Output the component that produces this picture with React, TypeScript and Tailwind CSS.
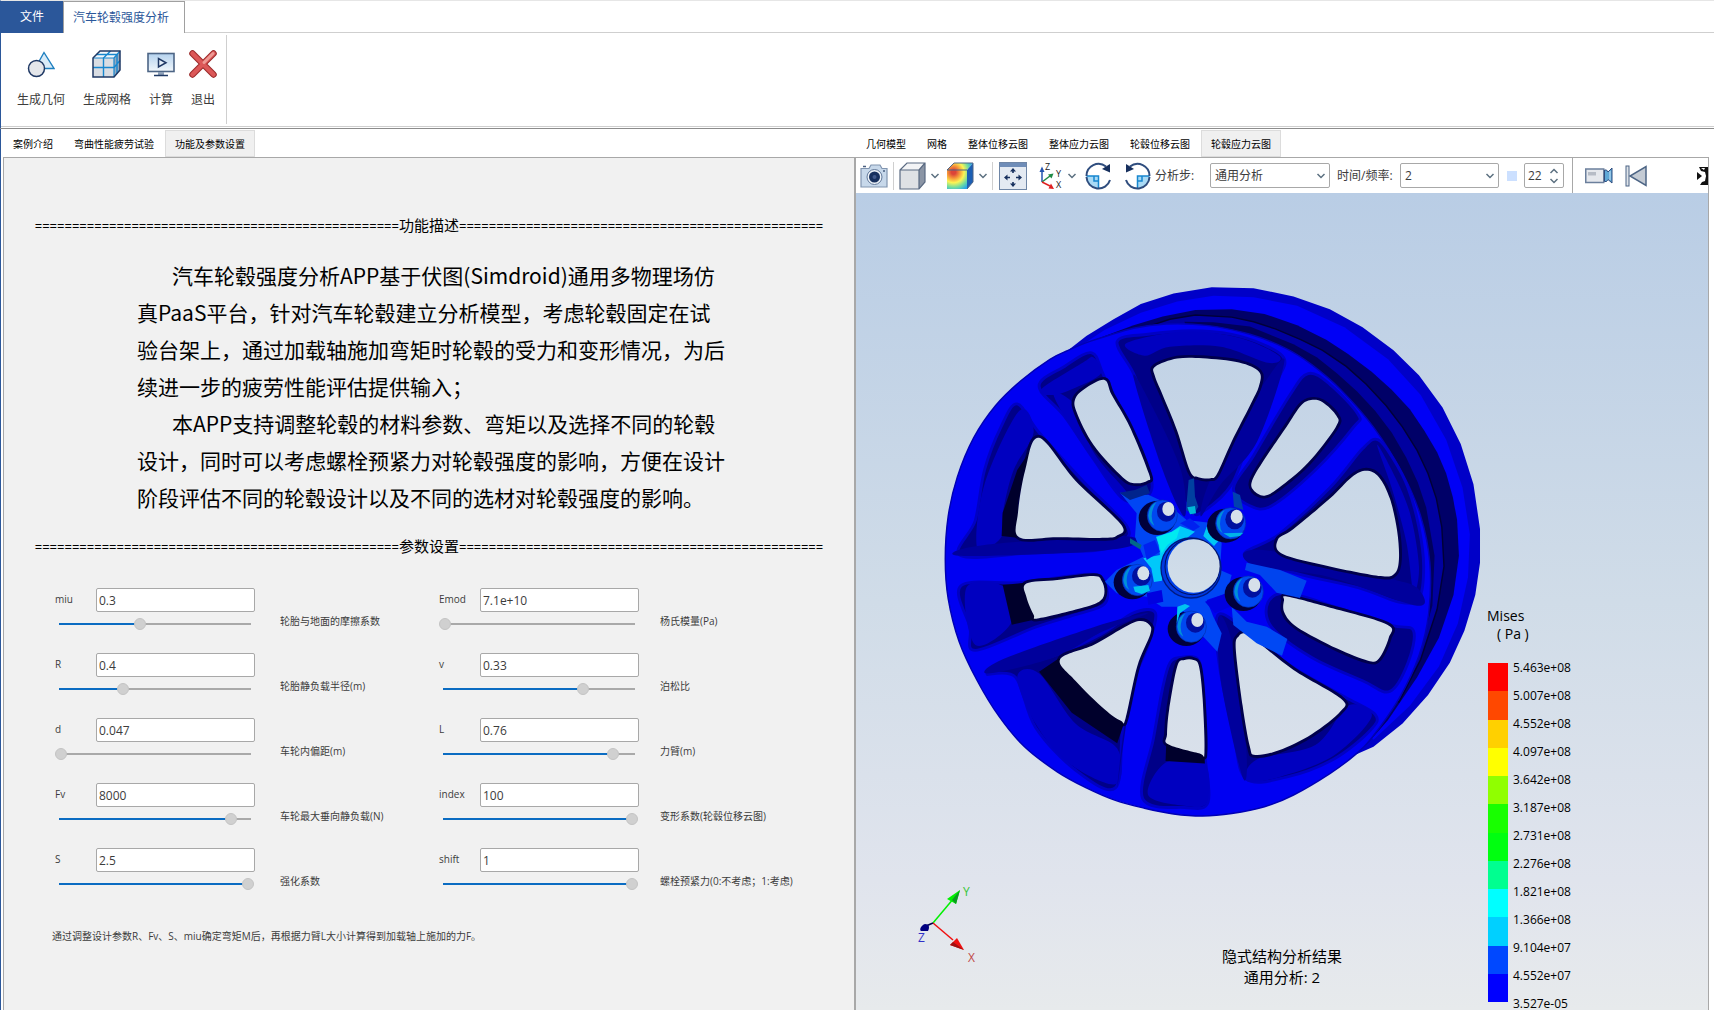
import type { ReactNode } from "react";

type Point = [number, number];

type FieldData = {
  name: string;
  value: string;
  percent: number;
  hint: string;
};

const leftTabs = ["案例介绍", "弯曲性能疲劳试验", "功能及参数设置"];

const rightTabs = [
  "几何模型",
  "网格",
  "整体位移云图",
  "整体应力云图",
  "轮毂位移云图",
  "轮毂应力云图",
];

const description = [
  "汽车轮毂强度分析APP基于伏图(Simdroid)通用多物理场仿",
  "真PaaS平台，针对汽车轮毂建立分析模型，考虑轮毂固定在试",
  "验台架上，通过加载轴施加弯矩时轮毂的受力和变形情况，为后",
  "续进一步的疲劳性能评估提供输入；",
  "本APP支持调整轮毂的材料参数、弯矩以及选择不同的轮毂",
  "设计，同时可以考虑螺栓预紧力对轮毂强度的影响，方便在设计",
  "阶段评估不同的轮毂设计以及不同的选材对轮毂强度的影响。",
];

const wheelFields: FieldData[] = [
  { name: "miu", value: "0.3", percent: 42, hint: "轮胎与地面的摩擦系数" },
  { name: "R", value: "0.4", percent: 33, hint: "轮胎静负载半径(m)" },
  { name: "d", value: "0.047", percent: 0, hint: "车轮内偏距(m)" },
  { name: "Fv", value: "8000", percent: 91, hint: "车轮最大垂向静负载(N)" },
  { name: "S", value: "2.5", percent: 100, hint: "强化系数" },
];

const materialFields: FieldData[] = [
  { name: "Emod", value: "7.1e+10", percent: 0, hint: "杨氏模量(Pa)" },
  { name: "v", value: "0.33", percent: 74, hint: "泊松比" },
  { name: "L", value: "0.76", percent: 90, hint: "力臂(m)" },
  { name: "index", value: "100", percent: 100, hint: "变形系数(轮毂位移云图)" },
  { name: "shift", value: "1", percent: 100, hint: "螺栓预紧力(0:不考虑；1:考虑)" },
];

const legendColors = [
  "bg-[#ff0000]",
  "bg-[#ff4800]",
  "bg-[#ffd000]",
  "bg-[#ffff00]",
  "bg-[#90ff00]",
  "bg-[#18ff00]",
  "bg-[#00ff10]",
  "bg-[#00ff90]",
  "bg-[#00ffff]",
  "bg-[#00d0ff]",
  "bg-[#0048ff]",
  "bg-[#0000ff]",
];

const legendValues = [
  "5.463e+08",
  "5.007e+08",
  "4.552e+08",
  "4.097e+08",
  "3.642e+08",
  "3.187e+08",
  "2.731e+08",
  "2.276e+08",
  "1.821e+08",
  "1.366e+08",
  "9.104e+07",
  "4.552e+07",
  "3.527e-05",
];

const App = () => {
  return (
    <div
      lang="zh-CN"
      className="flex h-screen flex-col overflow-hidden bg-white font-['Open_Sans','Noto_Sans_CJK_SC',sans-serif] text-xs text-[#3c3c3c]"
    >
      <Ribbon />
      <main className="flex min-h-0 flex-1 border-t border-[#8c8c8c]">
        <SettingsPane />
        <ResultPane />
      </main>
    </div>
  );
};

export default App;

/* ---------- ribbon ---------- */

const Ribbon = () => {
  return (
    <header className="border-t border-l border-t-[#e6e6e6] border-l-[#2b579a]">
      <div className="flex h-8">
        <button className="w-[62px] bg-[#2b579a] text-white">文件</button>
        <button className="w-[122px] border-x border-t border-[#a0a0a0] pr-1.5 text-[#2b579a]">
          汽车轮毂强度分析
        </button>
        <div className="flex-1 border-b border-[#cfcfcf]" />
      </div>
      <div className="flex h-[93px] pt-0.5 pb-0.5">
        <div className="flex border-r border-[#cfcfcf] pt-[15px] pr-0.5 pl-[7px]">
          <RibbonButton label="生成几何" width="w-[66px]">
            <GeometryIcon />
          </RibbonButton>
          <RibbonButton label="生成网格" width="w-[66px]">
            <MeshIcon />
          </RibbonButton>
          <RibbonButton label="计算" width="w-[42px]">
            <ComputeIcon />
          </RibbonButton>
          <RibbonButton label="退出" width="w-[42px]">
            <ExitIcon />
          </RibbonButton>
        </div>
      </div>
      <div className="h-0.5 border-t border-[#cfcfcf]" />
    </header>
  );
};

const RibbonButton = ({
  label,
  width,
  children,
}: {
  label: string;
  width: string;
  children: ReactNode;
}) => {
  return (
    <button className={`flex flex-col items-center gap-3.5 ${width}`}>
      {children}
      <span className="leading-4">{label}</span>
    </button>
  );
};

const GeometryIcon = () => (
  <svg width="28" height="28" viewBox="0 0 28 28">
    <path d="M17 2.5 27 18.5H8Z" fill="#d8ebf8" stroke="#1d7fc0" strokeWidth="1.4" />
    <circle cx="9.500" cy="18.500" r="8" fill="#e4e6ea" stroke="#1f3864" strokeWidth="1.5" />
  </svg>
);

const MeshIcon = () => (
  <svg width="30" height="28" viewBox="0 0 30 28">
    <path d="M1 8 8 1h20l-6 7Z" fill="#f4f7fa" />
    <path d="M1 8h21v19H1Z" fill="#d9dde3" />
    <path d="M22 8l6-7v19l-6 7Z" fill="#93a9c0" />
    <path d="M11.500 27V8l7-7M4.500 4.500H25v19M1 17.500h21l6-7" fill="none" stroke="#1787cf" strokeWidth="1.4" />
    <path d="M1 8h21v19M22 8l6-7" fill="none" stroke="#1787cf" strokeWidth="1.2" />
    <path d="M1 8 8 1h20v19l-6 7H1Z" fill="none" stroke="#1f3864" strokeWidth="1.5" />
  </svg>
);

const ComputeIcon = () => (
  <svg width="28" height="28" viewBox="0 0 28 28">
    <defs>
      <linearGradient id="screen" x2="0" y2="1">
        <stop stopColor="#b4d2ee" />
        <stop offset="1" stopColor="#f2f7fb" />
      </linearGradient>
    </defs>
    <rect x="1" y="3.500" width="26" height="18" fill="url(#screen)" stroke="#4d6585" strokeWidth="1.600" />
    <path d="M11.500 8.500v8.500l7.500-4.250Z" fill="#e7f1fa" stroke="#1f3864" strokeWidth="1.500" />
    <path d="M11 22h6v3h-6Z" fill="#8ea0b8" />
    <path d="M7 25.500h14" stroke="#1f3864" strokeWidth="1.500" />
  </svg>
);

const ExitIcon = () => (
  <svg width="28" height="28" viewBox="0 0 28 28">
    <path d="M3.500 3.500 24.500 24.500M24.500 3.500 3.500 24.500" stroke="#9c2b2b" strokeWidth="6.500" strokeLinecap="round" />
    <path d="M3.500 3.500 24.500 24.500M24.500 3.500 3.500 24.500" stroke="#dc5858" strokeWidth="4.500" strokeLinecap="round" />
    <path d="M24 3.500 15 12.500" stroke="#ee9a94" strokeWidth="3" strokeLinecap="round" />
  </svg>
);

/* ---------- left pane ---------- */

const Tabs = ({ items, active }: { items: string[]; active: string }) => {
  return (
    <div role="tablist" className="flex h-7 gap-px pt-px text-[10px] text-black">
      {items.map((item) => (
        <button
          key={item}
          role="tab"
          aria-selected={item === active}
          className={
            item === active
              ? "border border-[#dcdcdc] bg-[#f0f0f0] px-[9px] pt-0.5"
              : "px-2.5 pt-0.5"
          }
        >
          {item}
        </button>
      ))}
    </div>
  );
};

const SettingsPane = () => {
  return (
    <section className="flex w-[calc(50%-1px)] flex-col border-l border-[#2b579a] pl-0.5">
      <Tabs items={leftTabs} active="功能及参数设置" />
      <div className="flex-1 border-t border-r-2 border-l border-[#a8a8a8] bg-[#f1f1f1] pt-[57px]">
        <SectionTitle text="功能描述" />
        <div className="mx-auto mt-[22px] w-[584px] text-[21px] leading-[37px] whitespace-nowrap text-black">
          {description.map((line, i) => (
            <p
              key={line}
              className={`font-['Noto_Sans_CJK_SC',sans-serif] ${i === 0 || i === 4 ? "pl-[35px]" : ""}`}
            >
              {line}
            </p>
          ))}
        </div>
        <div className="mt-5">
          <SectionTitle text="参数设置" />
        </div>
        <form className="mt-8 grid grid-cols-[384fr_415fr] pl-[51px]">
          <div>
            {wheelFields.map((field) => (
              <Field key={field.name} field={field} gap="gap-[25px]" />
            ))}
          </div>
          <div>
            {materialFields.map((field) => (
              <Field key={field.name} field={field} gap="gap-[21px]" />
            ))}
          </div>
        </form>
        <p className="mt-[13px] pl-12 text-[10px] leading-5">
          通过调整设计参数R、Fv、S、miu确定弯矩M后，再根据力臂L大小计算得到加载轴上施加的力F。
        </p>
      </div>
    </section>
  );
};

const SectionTitle = ({ text }: { text: string }) => {
  const rule = "=".repeat(49);
  return (
    <h2 className="flex h-5 items-baseline justify-center text-[13px] leading-5 whitespace-nowrap text-black">
      {rule}
      <span className="text-[15px]">{text}</span>
      {rule}
    </h2>
  );
};

const Field = ({ field, gap }: { field: FieldData; gap: string }) => {
  return (
    <div className={`flex h-[65px] ${gap}`}>
      <div className="w-[200px]">
        <div className="flex items-center">
          <label htmlFor={field.name} className="w-[41px] text-[10px]">
            {field.name}
          </label>
          <input
            id={field.name}
            defaultValue={field.value}
            className="h-6 w-[159px] rounded-xs border border-[#a8a8a8] bg-white px-0.5 outline-none"
          />
        </div>
        <input
          type="range"
          aria-label={field.hint}
          min={0}
          max={100}
          defaultValue={field.percent}
          className="mt-1.5 block h-3 w-[199px] appearance-none bg-[length:192px_2px] bg-[position:4px_50%] bg-no-repeat [&::-webkit-slider-thumb]:size-3 [&::-webkit-slider-thumb]:appearance-none [&::-webkit-slider-thumb]:rounded-full [&::-webkit-slider-thumb]:border [&::-webkit-slider-thumb]:border-[#c4c4c4] [&::-webkit-slider-thumb]:bg-[#d0d0d0]"
          style={{
            backgroundImage: `linear-gradient(to right, #0b6cc2 ${field.percent}%, #a9a9a9 ${field.percent}%)`,
          }}
        />
      </div>
      <span className="pt-[23px] text-[10px] leading-5">{field.hint}</span>
    </div>
  );
};

/* ---------- right pane ---------- */

const ResultPane = () => {
  return (
    <section className="flex min-w-0 flex-1 flex-col pr-[5px]">
      <Tabs items={rightTabs} active="轮毂应力云图" />
      <div className="flex min-h-0 flex-1 flex-col border-t border-r border-[#a8a8a8]">
        <Toolbar />
        <Viewport />
      </div>
    </section>
  );
};

const Divider = ({ className }: { className: string }) => (
  <div className={`w-px shrink-0 bg-[#cfcfcf] ${className}`} />
);

const Toolbar = () => {
  return (
    <div className="flex h-[35px] shrink-0 items-center pl-1">
      <button aria-label="截图" className="shrink-0">
        <CameraIcon />
      </button>
      <Divider className="ml-[5px] h-7" />
      <button aria-label="显示模式" className="ml-[5px] shrink-0">
        <CubeIcon />
      </button>
      <DropButton label="显示模式选项" className="ml-1" />
      <button aria-label="云图" className="ml-1.5 shrink-0">
        <ContourCubeIcon />
      </button>
      <DropButton label="云图选项" className="ml-1" />
      <Divider className="ml-1 h-7" />
      <button aria-label="适应窗口" className="ml-1.5 shrink-0">
        <FitIcon />
      </button>
      <button aria-label="视角" className="ml-3 shrink-0">
        <AxesIcon />
      </button>
      <DropButton label="视角选项" className="ml-1" />
      <button aria-label="顺时针旋转" className="ml-2 shrink-0">
        <RotateIcon />
      </button>
      <button aria-label="逆时针旋转" className="ml-3 shrink-0 -scale-x-100">
        <RotateIcon />
      </button>
      <label htmlFor="step" className="ml-1 w-[55px] shrink-0">
        分析步:
      </label>
      <SelectBox id="step" value="通用分析" width="w-[120px]" />
      <label htmlFor="time" className="ml-[7px] w-[63px] shrink-0 whitespace-nowrap">
        时间/频率:
      </label>
      <SelectBox id="time" value="2" width="w-[99px]" />
      <div className="ml-2 size-2.5 shrink-0 bg-[#cce0ff]" />
      <div className="ml-[7px] flex h-[25px] w-10 shrink-0 items-center rounded-xs border border-[#a8a8a8]">
        <input
          aria-label="帧"
          defaultValue="22"
          className="w-6 bg-transparent pl-[3px] outline-none"
        />
        <div className="flex flex-col gap-1">
          <button aria-label="增加" className="rotate-180">
            <Chevron />
          </button>
          <button aria-label="减少">
            <Chevron />
          </button>
        </div>
      </div>
      <div className="ml-2 h-full w-px shrink-0 bg-[#a8a8a8]" />
      <button aria-label="录制" className="ml-3 shrink-0">
        <VideoIcon />
      </button>
      <button aria-label="第一帧" className="ml-3 shrink-0">
        <FirstFrameIcon />
      </button>
      <button aria-label="更多" className="ml-auto shrink-0">
        <MoreIcon />
      </button>
    </div>
  );
};

const Chevron = () => (
  <svg width="10" height="6" viewBox="0 0 10 6" className="block">
    <path d="M1.500 1l3.500 3.500L8.500 1" fill="none" stroke="#5c7080" strokeWidth="1.500" />
  </svg>
);

const DropButton = ({ label, className }: { label: string; className: string }) => (
  <button aria-label={label} className={`shrink-0 ${className}`}>
    <Chevron />
  </button>
);

const SelectBox = ({ id, value, width }: { id: string; value: string; width: string }) => {
  return (
    <div className={`relative shrink-0 ${width}`}>
      <select
        id={id}
        defaultValue={value}
        className="h-[25px] w-full appearance-none rounded-xs border border-[#a8a8a8] bg-white pl-1 outline-none"
      >
        <option>{value}</option>
      </select>
      <div className="pointer-events-none absolute top-2.5 right-1">
        <Chevron />
      </div>
    </div>
  );
};

const CameraIcon = () => (
  <svg width="28" height="24" viewBox="0 0 28 24">
    <path d="M1 4.500h8L11 1h9l2 3.500h5V23H1Z" fill="#c7d8ea" stroke="#8195b0" strokeWidth="1.200" />
    <circle cx="14.500" cy="13" r="7.500" fill="#eef3f8" stroke="#63799a" />
    <circle cx="14.500" cy="13" r="5.500" fill="#17305e" />
    <circle cx="14.500" cy="13" r="2" fill="#41598a" />
    <path d="M3 2.500h3M23 7h2" stroke="#4a5f80" strokeWidth="1.500" />
  </svg>
);

const CubeIcon = () => (
  <svg width="27" height="28" viewBox="0 0 27 28">
    <path d="M1 8 8 1h18l-6 7Z" fill="#f3f4f6" />
    <path d="M1 8h19v19H1Z" fill="#dfe1e5" />
    <path d="M20 8l6-7v19l-6 7Z" fill="#8b95a5" />
    <path d="M1 8 8 1h18v19l-6 7H1ZM1 8h19v19M20 8l6-7" fill="none" stroke="#5a6a82" strokeWidth="1.200" />
  </svg>
);

const ContourCubeIcon = () => (
  <svg width="28" height="28" viewBox="0 0 28 28">
    <defs>
      <radialGradient id="contour" cx="0.250" cy="0.350" r="0.850">
        <stop offset="0.100" stopColor="#dc4438" />
        <stop offset="0.300" stopColor="#f7a03c" />
        <stop offset="0.480" stopColor="#fbf455" />
        <stop offset="0.700" stopColor="#6fdca0" />
        <stop offset="0.900" stopColor="#29a8ea" />
      </radialGradient>
    </defs>
    <path d="M1 8 8 1h19l-6 7v19H1Z" fill="url(#contour)" />
    <path d="M21 8l6-7v19l-6 7Z" fill="#1c5fb4" />
    <path d="M1 8 8 1h19v19l-6 7M1 8h20" fill="none" stroke="#4d6585" />
  </svg>
);

const FitIcon = () => (
  <svg width="28" height="28" viewBox="0 0 28 28">
    <rect x="0.500" y="0.500" width="27" height="27" fill="#e4eaf2" stroke="#6f86a6" />
    <rect x="1" y="1" width="26" height="4" fill="#6f8db8" />
    <path d="M14 11V8.500M14 20v2.500M11 15.500H8M17 15.500h3" stroke="#17305e" strokeWidth="1.600" />
    <path d="M14 6l3 3.500h-6ZM14 25l3-3.500h-6ZM5 15.500l3.500-3v6ZM23 15.500l-3.500-3v6Z" fill="#17305e" />
  </svg>
);

const AxesIcon = () => (
  <svg width="24" height="30" viewBox="0 -1 24 30" fontSize="9" fill="#222">
    <path d="M3 20V9" stroke="#2455b0" strokeWidth="1.500" />
    <path d="M3 4.500 5.500 10h-5Z" fill="#2455b0" />
    <path d="M3 20l8-6" stroke="#1f8a45" strokeWidth="1.500" />
    <path d="M14.500 11.500 12.500 16.500 9 12.500Z" fill="#1f8a45" />
    <path d="M3 20l8 4" stroke="#e02020" strokeWidth="1.500" />
    <path d="M15 27 9.500 26.500 12 21.500Z" fill="#e02020" />
    <text x="6" y="8">Z</text>
    <text x="17" y="15">Y</text>
    <text x="17" y="26">X</text>
  </svg>
);

const RotateIcon = () => (
  <svg width="27" height="28" viewBox="0 0 27 28">
    <path d="M13.500 14v12.500A12 12 0 0 1 1.500 14Z" fill="#a9daf5" />
    <path d="M1.500 14h12v12M9 14v5h4.500" fill="none" stroke="#1787cf" strokeWidth="1.500" />
    <path d="M1.500 14A12 12 0 0 1 21 4.500M1.500 15A12 12 0 0 0 25 18" fill="none" stroke="#2f4d7e" strokeWidth="2" />
    <path d="M25 2v8.500L17 7Z" fill="#17305e" />
  </svg>
);

const VideoIcon = () => (
  <svg width="28" height="17" viewBox="0 0 28 17">
    <rect x="0.750" y="2" width="18" height="13.500" fill="#e5e8ed" stroke="#6b7f9c" strokeWidth="1.500" />
    <path d="M3 5h8v3.500H3Z" fill="#b6bcc6" />
    <path d="M19.500 3h2l1.500 2 4-4v15l-4-3.500-1.500 2h-2Z" fill="#5fa8d6" stroke="#2f4d7e" />
    <path d="M25 4v9" stroke="#c9e4f6" />
  </svg>
);

const FirstFrameIcon = () => (
  <svg width="22" height="22" viewBox="0 0 22 22">
    <rect x="1" y="1" width="3" height="20" fill="#dfe4ea" stroke="#4d6585" />
    <path d="M21 1.500v19L5 11Z" fill="#c4cbd4" stroke="#4d6585" strokeWidth="1.500" />
  </svg>
);

const MoreIcon = () => (
  <svg width="12" height="18" viewBox="0 0 12 18">
    <path d="M3 0h9v18H4l2-3 3-1 1-5-1-4-4-1Z" fill="#111" />
    <path d="M5 1h4l-1 2ZM7 7l3 2-3 2Z" fill="#fff" />
    <path d="M1 5l5 4-5 4Z" fill="#111" />
  </svg>
);

const Viewport = () => {
  return (
    <div className="relative min-h-0 flex-1 overflow-hidden bg-linear-[to_bottom,#b9cde5_0%,#d0dce8_50%,#e0e4ed_84%,#e7eaec_100%] text-black">
      <Wheel />
      <Triad />
      <div className="absolute inset-x-0 bottom-[22px] text-center text-[15px] leading-[21px]">
        <p>隐式结构分析结果</p>
        <p>通用分析: 2</p>
      </div>
      <Legend />
    </div>
  );
};

const Legend = () => {
  return (
    <div className="absolute top-[413px] right-[115px] w-[106px]">
      <p className="text-sm leading-5">Mises</p>
      <p className="pl-2.5 text-sm leading-4">( Pa )</p>
      <div className="flex gap-[5px] pt-[21px] pl-px">
        <div className="flex h-[339px] w-5 flex-col">
          {legendColors.map((color) => (
            <div key={color} className={`flex-1 ${color}`} />
          ))}
        </div>
        <ul className="-mt-[9px] leading-7">
          {legendValues.map((value) => (
            <li key={value}>{value}</li>
          ))}
        </ul>
      </div>
    </div>
  );
};

const Triad = () => (
  <svg
    width="70"
    height="84"
    viewBox="0 0 70 84"
    fontSize="12"
    className="absolute bottom-[44px] left-[58px]"
  >
    <path d="M19 41 40 16" stroke="#00f000" strokeWidth="1.500" />
    <path d="M46 8 42 22 33 17Z" fill="#00f000" />
    <path d="M42 22 38 18 46 8Z" fill="#0a9a20" />
    <path d="M19 41 39 58" stroke="#f01010" strokeWidth="1.500" />
    <path d="M50 68 36 63 43 56Z" fill="#f01010" />
    <path d="M50 68 36 63 39 60Z" fill="#a01010" />
    <path d="M19 41 12 44" stroke="#000050" strokeWidth="1.500" />
    <path d="M7 49c-2-1 0-6 4-7 4 0 5 3 3 7Z" fill="#000080" />
    <text x="49" y="14" fill="#35c535">Y</text>
    <text x="54" y="80" fill="#c04848">X</text>
    <text x="4" y="60" fill="#3030c8">Z</text>
  </svg>
);

/* ---------- wheel ---------- */

// Closed Catmull-Rom curve through the points
const curve = (points: Point[]) => {
  const n = points.length;
  let d = `M${points[0][0]} ${points[0][1]}`;
  for (let i = 0; i < n; i++) {
    const p0 = points[(i + n - 1) % n];
    const p1 = points[i];
    const p2 = points[(i + 1) % n];
    const p3 = points[(i + 2) % n];
    d += `C${p1[0] + (p2[0] - p0[0]) / 6} ${p1[1] + (p2[1] - p0[1]) / 6} `;
    d += `${p2[0] - (p3[0] - p1[0]) / 6} ${p2[1] - (p3[1] - p1[1]) / 6} ${p2[0]} ${p2[1]}`;
  }
  return d + "Z";
};

const poly = (points: Point[]) => "M" + points.map((p) => p.join(" ")).join("L") + "Z";

const rearRim: Point[] = [
  [380, 225], [430, 185], [505, 138], [580, 95], [670, 66], [775, 48], [890, 51], [1000, 74],
  [1100, 110], [1190, 160], [1275, 225], [1345, 295], [1410, 385], [1460, 487], [1495, 600],
  [1513, 725], [1513, 820], [1500, 910], [1470, 1010], [1430, 1100], [1370, 1190], [1300, 1270],
  [1220, 1335], [1170, 1357], [900, 900],
];

const rearRimFace: Point[] = [
  [400, 222], [480, 168], [580, 120], [680, 88], [780, 72], [890, 76], [1010, 100], [1140, 160],
  [1260, 250], [1350, 350], [1420, 475], [1465, 610], [1485, 740], [1480, 860], [1452, 990],
  [1400, 1110], [1320, 1220], [1220, 1315], [900, 900],
];

const barrel: Point[] = [
  [440, 200], [560, 155], [640, 130], [730, 112], [830, 110], [920, 123], [1010, 155], [1090, 195],
  [1150, 235], [1215, 285], [1270, 335], [1320, 390], [1360, 450], [1395, 510], [1420, 570],
  [1438, 635], [1450, 700], [1455, 800], [1440, 910], [1400, 1030], [1340, 1140], [1260, 1260],
  [1200, 1330], [900, 900],
];

const barrelDark: Point[] = [
  [600, 158], [660, 138], [730, 126], [830, 132], [890, 145], [950, 165], [1020, 195], [1080, 225],
  [1145, 270], [1200, 320], [1255, 380], [1300, 440], [1340, 505], [1370, 570], [1393, 640],
  [1408, 720], [1414, 830], [1395, 950], [1350, 1090], [1290, 1210], [900, 900],
];

const barrelLight: Point[] = [
  [700, 145], [780, 146], [880, 158], [1000, 208], [1065, 245], [1120, 290], [1175, 340],
  [1225, 395], [1270, 455], [1310, 525], [1342, 595], [1365, 665], [1388, 800], [1382, 940],
  [1340, 1090], [900, 900],
];

const frontFace: Point[] = [
  [440, 200], [560, 163], [650, 151], [760, 155], [880, 180], [980, 220], [1050, 265], [1130, 335],
  [1220, 440], [1300, 570], [1350, 690], [1375, 820], [1372, 960], [1345, 1080], [1290, 1200],
  [1215, 1310], [1170, 1357], [1100, 1410], [1000, 1470], [920, 1503], [830, 1522], [750, 1529],
  [670, 1523], [590, 1507], [510, 1485], [430, 1450], [350, 1405], [260, 1335], [190, 1250],
  [130, 1150], [80, 1040], [50, 920], [42, 810], [50, 690], [75, 580], [120, 470], [180, 380],
  [250, 310], [330, 250], [380, 225],
];

// Recessed walls around each window, clockwise from the top one
const pockets: Point[][] = [
  [[515, 200], [600, 180], [720, 170], [830, 180], [920, 210], [975, 250], [955, 310], [890, 440], [830, 600], [745, 680], [720, 670], [670, 600], [600, 400], [560, 290]],
  [[1040, 290], [1100, 320], [1178, 405], [1165, 440], [1060, 560], [940, 660], [880, 660], [835, 610], [890, 520], [990, 350]],
  [[1232, 475], [1275, 530], [1315, 610], [1345, 720], [1358, 830], [1345, 920], [1290, 930], [1180, 890], [1010, 850], [865, 800], [960, 740], [1100, 610], [1190, 500]],
  [[930, 930], [985, 905], [1120, 945], [1270, 995], [1330, 1010], [1315, 1100], [1265, 1180], [1190, 1150], [1050, 1085], [940, 1000]],
  [[790, 970], [840, 985], [900, 1040], [1010, 1120], [1140, 1195], [1225, 1245], [1210, 1290], [1110, 1370], [980, 1420], [870, 1425], [835, 1300], [795, 1100]],
  [[690, 1085], [735, 1088], [748, 1150], [756, 1350], [765, 1490], [700, 1505], [585, 1480], [615, 1310], [640, 1170], [660, 1100]],
  [[560, 960], [620, 960], [600, 1050], [560, 1150], [530, 1280], [510, 1450], [400, 1400], [290, 1280], [235, 1140], [160, 1130], [340, 1080], [470, 1020]],
  [[85, 884], [250, 875], [440, 852], [482, 880], [480, 935], [400, 965], [290, 1000], [125, 1065], [110, 1000]],
  [[240, 375], [300, 455], [420, 590], [540, 715], [530, 760], [460, 785], [300, 790], [85, 800], [125, 700], [150, 560], [195, 440]],
  [[300, 325], [370, 270], [445, 232], [480, 300], [560, 460], [610, 590], [590, 640], [530, 640], [450, 530], [370, 410]],
];

// Side walls lit from the front
const litWalls: Point[][] = [
  [[540, 205], [700, 172], [850, 190], [960, 240], [930, 260], [800, 215], [660, 215], [590, 240]],
  [[305, 335], [420, 260], [450, 245], [470, 290], [400, 330], [340, 350]],
  [[245, 395], [285, 455], [230, 560], [200, 680], [195, 750], [130, 780], [150, 600]],
  [[100, 890], [200, 885], [225, 985], [125, 1050]],
  [[240, 1140], [300, 1130], [400, 1270], [515, 1340], [510, 1440], [380, 1380], [290, 1270]],
  [[650, 1378], [755, 1382], [762, 1490], [700, 1500], [600, 1470]],
  [[1230, 490], [1270, 560], [1320, 680], [1345, 830], [1330, 900], [1310, 760], [1270, 610]],
  [[870, 1430], [900, 1370], [1060, 1330], [1150, 1220], [1215, 1250], [1110, 1360], [960, 1420]],
  [[340, 350], [400, 380], [450, 510], [540, 620], [520, 625], [420, 490]],
];

const deepWalls: Point[][] = [
  [[300, 468], [240, 560], [200, 680], [197, 745], [240, 750], [242, 650], [262, 560]],
  [[200, 882], [260, 876], [292, 978], [225, 993]],
  [[300, 1125], [355, 1087], [420, 1170], [535, 1265], [515, 1325], [390, 1240]],
  [[650, 1325], [755, 1355], [756, 1382], [648, 1375]],
];

const windows: Point[][] = [
  [[620, 270], [680, 248], [750, 247], [850, 259], [905, 285], [905, 325], [880, 380], [830, 480], [790, 570], [772, 583], [738, 580], [715, 562], [680, 450], [640, 350], [618, 295]],
  [[1048, 364], [1080, 370], [1118, 408], [1116, 440], [1040, 540], [960, 610], [920, 632], [890, 617], [886, 590], [920, 530], [980, 440], [1020, 380]],
  [[1200, 562], [1235, 580], [1265, 640], [1285, 730], [1290, 810], [1278, 850], [1240, 857], [1100, 830], [970, 795], [957, 755], [1000, 725], [1100, 640], [1160, 580]],
  [[985, 915], [1110, 948], [1258, 993], [1262, 1030], [1235, 1088], [1205, 1094], [1120, 1060], [1010, 1000], [975, 960], [974, 925]],
  [[868, 1018], [900, 1040], [1000, 1120], [1130, 1200], [1130, 1235], [1050, 1300], [960, 1345], [895, 1358], [880, 1335], [860, 1220], [841, 1060], [850, 1025]],
  [[700, 1092], [725, 1092], [740, 1110], [750, 1200], [755, 1350], [740, 1353], [655, 1328], [652, 1300], [658, 1230], [680, 1110]],
  [[575, 983], [603, 993], [606, 1020], [570, 1110], [538, 1255], [525, 1262], [480, 1230], [400, 1150], [358, 1090], [450, 1050], [530, 1003]],
  [[265, 878], [350, 868], [450, 857], [472, 870], [480, 900], [470, 925], [430, 943], [300, 975], [285, 965], [265, 915]],
  [[300, 470], [400, 590], [525, 712], [515, 743], [480, 750], [350, 748], [245, 748], [242, 680], [262, 560]],
  [[480, 308], [430, 330], [400, 360], [404, 400], [450, 490], [530, 580], [565, 597], [598, 590], [602, 570], [550, 440], [500, 350]],
];

const spokeEdges: Point[][] = [
  [[560, 300], [640, 560], [700, 690], [690, 560], [610, 380]],
  [[975, 250], [900, 480], [800, 600], [745, 690], [770, 590], [880, 380]],
  [[150, 770], [520, 745], [560, 770], [420, 790], [80, 800]],
  [[160, 1130], [340, 1085], [480, 1010], [600, 960], [450, 1000], [200, 1090]],
  [[795, 970], [835, 1060], [870, 1340], [860, 1420], [800, 1150]],
  [[605, 1030], [550, 1180], [515, 1450], [560, 1150]],
  [[865, 790], [960, 790], [1250, 860], [1340, 890], [1340, 940], [1100, 860], [900, 830]],
];

const bolts: Point[] = [
  [265, 147],
  [470, 170],
  [190, 340],
  [523, 375],
  [352, 480],
];

const Wheel = () => (
  <svg
    width="570"
    height="560"
    viewBox="0 0 1568 1568"
    preserveAspectRatio="none"
    className="absolute top-[77px] left-[74px]"
  >
    <defs>
      <linearGradient id="sky" gradientUnits="userSpaceOnUse" x1="0" y1="-216" x2="0" y2="2072">
        <stop stopColor="#b9cde5" />
        <stop offset="0.500" stopColor="#d0dce8" />
        <stop offset="0.840" stopColor="#e0e4ed" />
        <stop offset="1" stopColor="#e7eaec" />
      </linearGradient>
    </defs>
    <path d={poly(rearRim)} fill="#0000c8" />
    <path d={poly(rearRimFace)} fill="#0000f6" />
    <path d={poly(barrel)} fill="#000068" />
    <path d={poly(barrelDark)} fill="#0000a0" stroke="#000038" strokeWidth="4" />
    <path d={poly(barrelLight)} fill="#00005c" />
    <path d={curve(frontFace)} fill="#0000f2" stroke="#0000b4" strokeWidth="4" />
    {pockets.map((points, i) => (
      <path key={i} d={curve(points)} fill="#000088" stroke="#0000c4" strokeWidth="8" />
    ))}
    {litWalls.map((points, i) => (
      <path key={i} d={curve(points)} fill="#0000c0" />
    ))}
    {spokeEdges.map((points, i) => (
      <path key={i} d={curve(points)} fill="#00009c" />
    ))}
    {windows.map((points, i) => (
      <path key={i} d={curve(points)} fill="none" stroke="#00004c" strokeWidth="16" />
    ))}
    {deepWalls.map((points, i) => (
      <path key={i} d={poly(points)} fill="#00002c" />
    ))}
    {windows.map((points, i) => (
      <path key={i} d={curve(points)} fill="url(#sky)" />
    ))}
    <Hub />
  </svg>
);

const Hub = () => (
  <g transform="translate(412.6 532) scale(0.917 0.9333)">
    <path d="M120 98 205 104 260 130 320 180 400 190 425 250 420 330 455 345 440 400 380 420 400 470 425 520 412 575 370 530 300 440 245 440 200 410 110 400 75 365 110 330 190 290 165 230 170 160Z" fill="#0046f4" />
    <path d="M118 98 150 120 210 100 200 75 165 90Z" fill="#00248c" />
    <path d="M326 60 342 55 345 110 355 140 340 165 318 150Z" fill="#0040a0" />
    <path d="M322 142 345 138 348 160 330 163Z" fill="#00b8d8" />
    <path d="M458 95 480 105 490 150 462 140Z" fill="#0040b0" />
    <path d="M150 235 185 255 180 268 150 250Z" fill="#006888" />
    <path d="M228 230 275 215 300 198 345 215 318 236 275 252 250 285 246 362 222 366 214 325 190 295 240 285 236 255Z" fill="#00c8fa" />
    <path d="M230 232 275 216 300 202 290 235 262 255 245 280Z" fill="#00eaf0" />
    <path d="M380 200 418 240 402 258 370 228Z" fill="#00c8f4" />
    <path d="M500 308 600 330 680 362 660 414 590 398 540 345 495 330Z" fill="#0044ee" />
    <path d="M455 440 500 485 560 500 622 537 606 587 530 550 460 495Z" fill="#0048f4" />
    <path d="M200 400 245 390 250 425 205 435ZM375 425 440 400 450 440 405 460Z" fill="#0000e0" />
    <path d="M190 255 225 240 240 275 200 300ZM300 190 330 175 360 200 340 212Z" fill="#0020f0" />
    <ellipse cx="333" cy="324" rx="90" ry="90" fill="#0038e0" stroke="#001a80" strokeWidth="4" />
    <ellipse cx="337" cy="320" rx="82" ry="84" fill="#0040e8" stroke="#001060" strokeWidth="3" />
    <ellipse cx="341" cy="318" rx="78" ry="80" fill="url(#hub-sky)" />
    <linearGradient id="hub-sky" x2="0" y2="1">
      <stop stopColor="#cbd9e8" />
      <stop offset="1" stopColor="#d2dee9" />
    </linearGradient>
    {bolts.map(([x, y]) => (
      <g key={x}>
        <ellipse cx={x - 33} cy={y + 27} rx="56" ry="51" fill="#00003c" />
        <ellipse cx={x - 18} cy={y + 20} rx="45" ry="47" fill="#0048f0" stroke="#0030b0" strokeWidth="2" />
        <path
          d={`M${x - 60} ${y + 20}q2 -30 24 -40q-14 20 -14 42q0 16 8 28q-16 -10 -18 -30Z`}
          fill="#0090d8"
        />
        <ellipse cx={x - 6} cy={y + 8} rx="28" ry="30" fill="#0010a0" />
        <ellipse cx={x} cy={y} rx="18" ry="21" fill="#d6e0ea" />
      </g>
    ))}
    <path d="M160 380 205 375 210 392 185 402 165 395Z" fill="#00c4f0" />
    <path d="M292 440 315 432 330 438 300 460 290 490Z" fill="#00c4f0" />
    <path d="M430 220 490 218 480 228 450 232Z" fill="#00b4e8" />
  </g>
);
